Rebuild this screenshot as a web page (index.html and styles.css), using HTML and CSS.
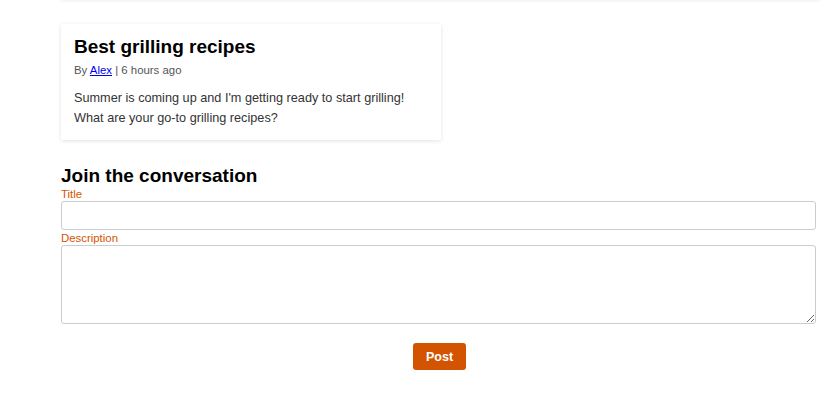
FILE: index.html
```html
<!DOCTYPE html>
<html>
<head>
<meta charset="utf-8">
<link rel="stylesheet" href="styles.css">
</head>
<body>
<div class="topbar"></div>
<main class="page">
  <article class="card">
    <h2 class="card-title">Best grilling recipes</h2>
    <p class="meta">By <a href="#">Alex</a> | 6 hours ago</p>
    <p class="body">Summer is coming up and I'm getting ready to start grilling! What are your go-to grilling recipes?</p>
  </article>
  <section class="reply">
    <h2 class="reply-title">Join the conversation</h2>
    <label class="label">Title</label>
    <input class="field" type="text">
    <label class="label label-gap">Description</label>
    <textarea class="area"></textarea>
    <div class="actions"><button class="btn">Post</button></div>
  </section>
</main>
</body>
</html>
```
FILE: styles.css
```css
html, body { margin: 0; padding: 0; background: #fff; }
body { font-family: "Liberation Sans", Arial, sans-serif; color: #333; }
.topbar { height: 2px; margin: 0 8px 0 61px; box-shadow: 0 1px 3px rgba(0,0,0,0.08); position: relative; top: -2px; }
.page { padding: 22px 0 0 61px; width: 755px; }
.card { width: 380px; box-sizing: border-box; padding: 12px 13px 12px; box-shadow: 0 1px 4px rgba(0,0,0,0.12); border-radius: 2px; }
.card-title { margin: 0; font-size: 19px; line-height: 22px; color: #000; font-weight: bold; }
.meta { margin: 5px 0 0; font-size: 11.4px; line-height: 15px; color: #555; }
.meta a { color: #00e; }
.body { margin: 10px 0 0; font-size: 12.7px; line-height: 20px; color: #333; }
.reply { margin-top: 25px; display: flex; flex-direction: column; }
.reply-title { margin: 0; font-size: 19px; line-height: 22px; color: #000; }
.label { font-size: 11.4px; line-height: 14px; color: #d35400; margin-top: 0; }
.label-gap { margin-top: 1px; }
.field { display: block; box-sizing: border-box; width: 755px; height: 29px; border: 1px solid #ccc; border-radius: 3px; margin: 0; padding: 0 6px; }
.area { display: block; box-sizing: border-box; width: 755px; height: 79px; border: 1px solid #ccc; border-radius: 3px; margin: 0; padding: 4px 6px; font-family: inherit; }
.actions { display: flex; justify-content: center; margin-top: 19px; padding-left: 2px; }
.btn { background: #d35400; color: #fff; border: 0; border-radius: 3px; font-family: inherit; font-weight: bold; font-size: 12.5px; width: 53px; height: 27px; padding: 0; }
```
